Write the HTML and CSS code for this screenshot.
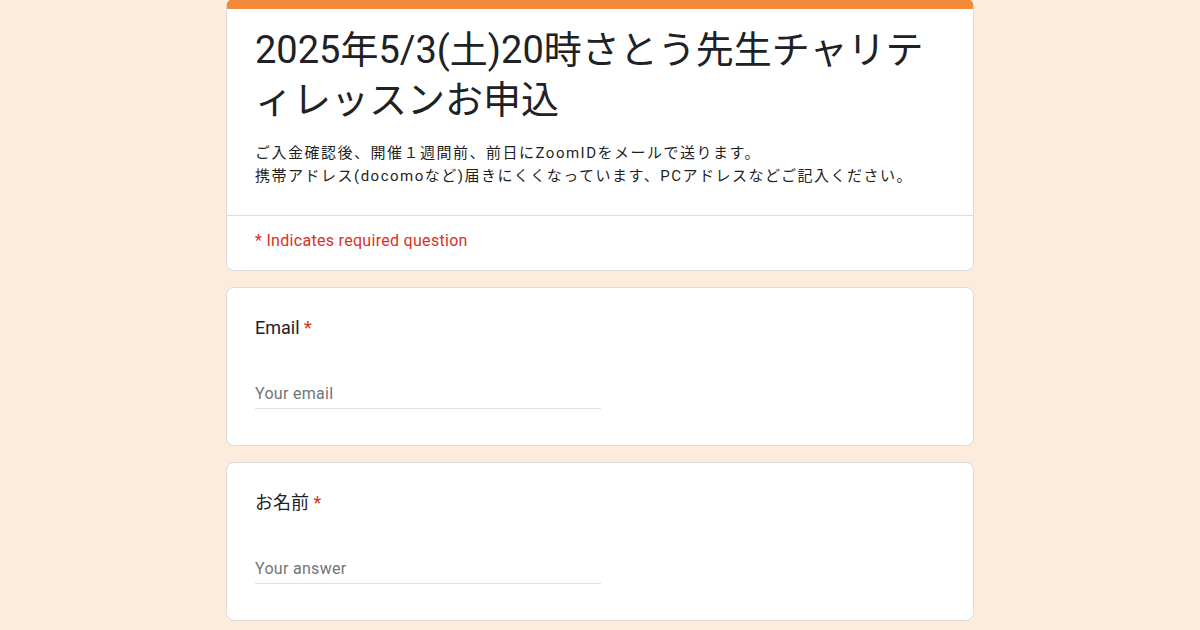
FILE: index.html
```html
<!DOCTYPE html>
<html lang="ja">
<head>
    <meta charset="UTF-8">
    <meta name="viewport" content="width=device-width, initial-scale=1.0">
    <title>2025年5/3(土)20時さとう先生チャリティレッスンお申込</title>
    <link rel="stylesheet" href="styles.css">
</head>
<body>
    <div class="form">
        <div class="card header">
            <div class="header-main">
                <h1 class="title">2025年5/3(土)20時さとう先生チャリティレッスンお申込</h1>
                <p class="desc">ご入金確認後、開催１週間前、前日にZoomIDをメールで送ります。<br>携帯アドレス(docomoなど)届きにくくなっています、PCアドレスなどご記入ください。</p>
            </div>
            <div class="required-note">* Indicates required question</div>
        </div>

        <div class="card question">
            <div class="label">Email <span class="star">*</span></div>
            <input class="answer" type="email" placeholder="Your email">
        </div>

        <div class="card question">
            <div class="label">お名前 <span class="star">*</span></div>
            <input class="answer" type="text" placeholder="Your answer">
        </div>
    </div>
</body>
</html>
```

FILE: styles.css
```css
body {
    margin: 0;
    padding: 0;
    background: #fdebdc;
    font-family: Roboto, "Noto Sans CJK JP", sans-serif;
    color: #202124;
}
.form {
    width: 748px;
    margin: -1px auto 0;
}
.card {
    background: #fff;
    border: 1px solid #dadce0;
    border-radius: 8px;
    margin-bottom: 16px;
    box-sizing: border-box;
}
.header {
    border-top: 10px solid #f2893b;
}
.header-main {
    padding: 16px 28px 27px;
    border-bottom: 1px solid #dadce0;
}
.title {
    margin: 0;
    font-size: 38px;
    font-weight: 400;
    line-height: 50px;
}
.desc {
    margin: 17px 0 0;
    font-size: 15px;
    line-height: 23px;
    letter-spacing: 1.5px;
    color: #1f1f1f;
}
.required-note {
    padding: 14px 28px 19px;
    font-size: 16px;
    line-height: 21px;
    letter-spacing: 0.3px;
    color: #d93025;
}
.question {
    padding: 28px 28px 36px;
}
.label {
    font-size: 18px;
    line-height: 24px;
}
.star {
    color: #d93025;
}
.answer {
    display: block;
    width: 346px;
    height: 30px;
    margin-top: 38px;
    padding: 0;
    border: none;
    border-bottom: 1px solid #e0e0e0;
    font-family: Roboto, "Noto Sans CJK JP", sans-serif;
    font-size: 16px;
    letter-spacing: 0.3px;
    color: #202124;
    outline: none;
    background: transparent;
}
.answer::placeholder {
    color: #70757a;
}
```
